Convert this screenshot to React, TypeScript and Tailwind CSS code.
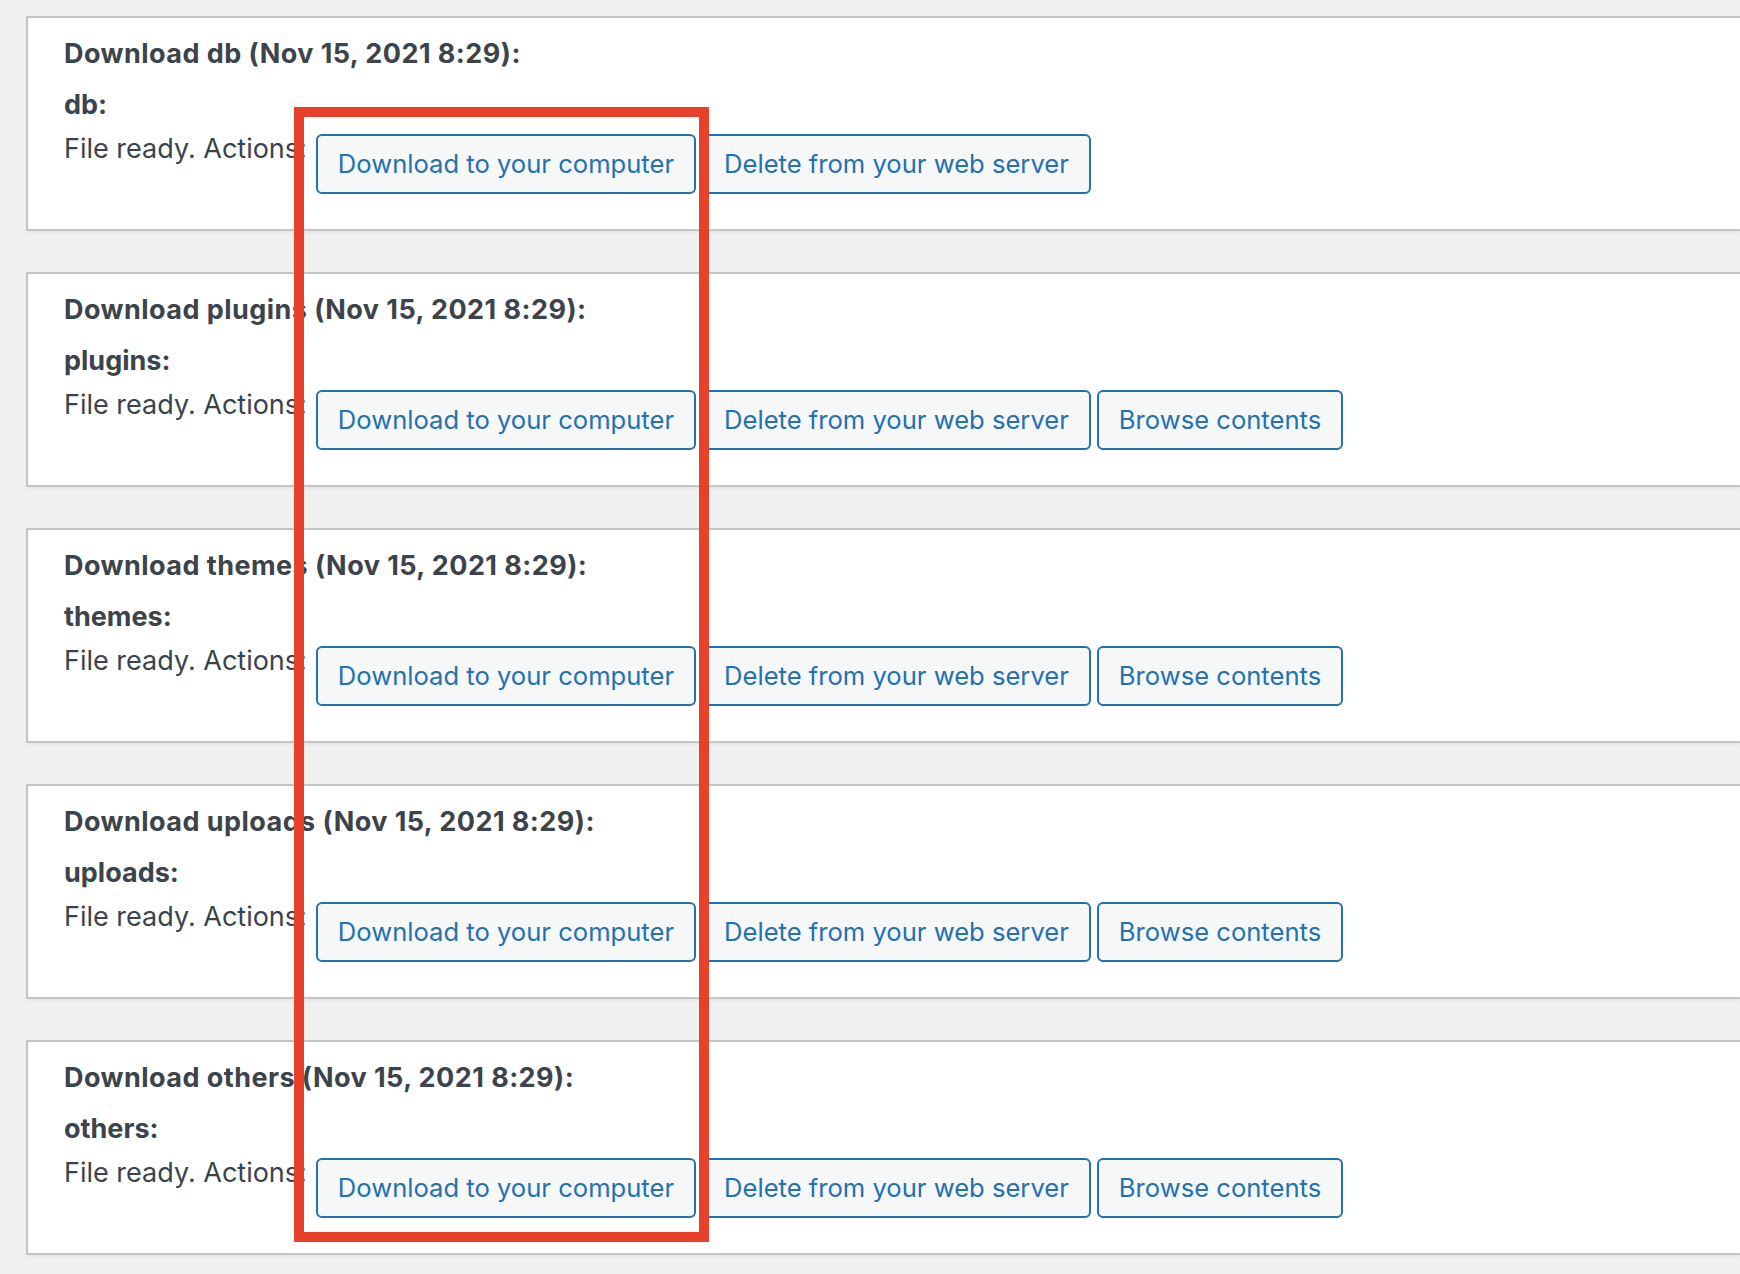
import React from 'react'

interface Backup {
  name: string
  browse: boolean
}

const backups: Backup[] = [
  { name: 'db', browse: false },
  { name: 'plugins', browse: true },
  { name: 'themes', browse: true },
  { name: 'uploads', browse: true },
  { name: 'others', browse: true },
]

function ActionButton({ children }: { children: React.ReactNode }) {
  return (
    <button className="h-[60px] px-[20px] border-2 border-[#2271b1] rounded-[6px] bg-[#f6f7f7] text-[#2271b1] text-[25.6px] leading-[56px] whitespace-nowrap">
      {children}
    </button>
  )
}

export default function App() {
  return (
    <div
      className="relative min-h-[1274px] bg-[#f0f0f1] pt-[16px] pl-[26px] overflow-hidden text-[#3c434a]"
      style={{ fontFamily: 'Inter, "Noto Sans", sans-serif' }}
    >
      <div className="flex flex-col gap-[41px]">
        {backups.map(b => (
          <div
            key={b.name}
            className="h-[215px] bg-white border-2 border-r-0 border-[#c3c4c7] shadow-[0_2px_2px_rgba(0,0,0,0.04)] pt-[18px] pl-[36px]"
          >
            <div className="text-[27px] leading-[36px] font-bold tracking-[0.45px]">
              Download {b.name} (Nov 15, 2021 8:29):
            </div>
            <div className="mt-[15px] text-[27px] leading-[36px] font-bold">{b.name}:</div>
            <div className="mt-[8px] flex items-start">
              <span className="text-[27px] leading-[36px]">File ready. Actions:</span>
              <div className="ml-[9px] mt-[3px] flex gap-[6px]">
                <ActionButton>Download to your computer</ActionButton>
                <ActionButton>Delete from your web server</ActionButton>
                {b.browse && <ActionButton>Browse contents</ActionButton>}
              </div>
            </div>
          </div>
        ))}
      </div>

      {/* highlight around the download buttons */}
      <div className="absolute left-[294px] top-[107px] w-[415px] h-[1135px] border-[10px] border-[#e8412b] pointer-events-none" />
    </div>
  )
}
